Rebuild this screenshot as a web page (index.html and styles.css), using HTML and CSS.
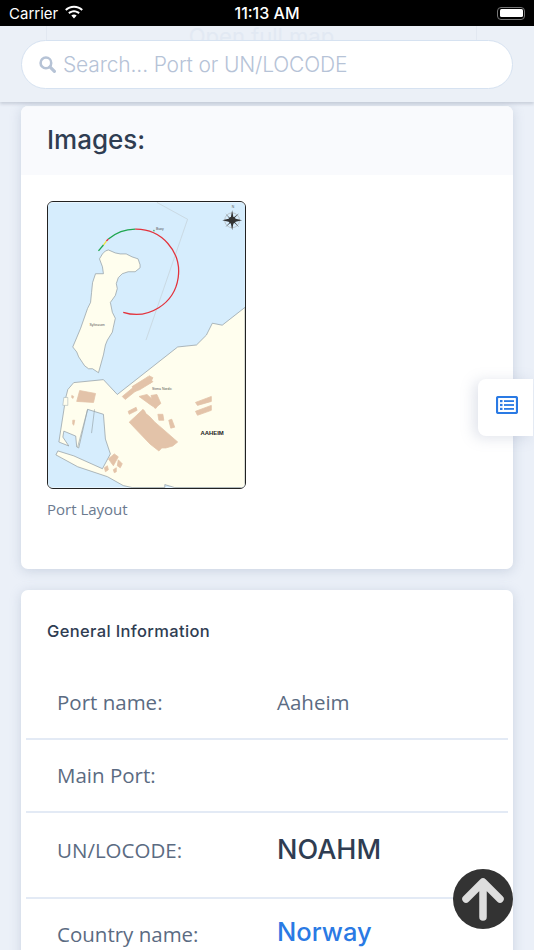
FILE: index.html
```html
<!DOCTYPE html>
<html lang="en">
<head>
<meta charset="utf-8">
<title>Port Aaheim</title>
<link rel="stylesheet" href="styles.css">
</head>
<body>
<div class="page">
  <div class="status">
    <div class="status-left">
      <span>Carrier</span>
      <svg class="wifi" viewBox="0 0 18 13"><path d="M9 2.200c2.600 0 5 1 6.800 2.700l1.200-1.300C14.900 1.600 12.100.4 9 .4S3.100 1.600 1 3.600l1.200 1.300C4 3.200 6.400 2.200 9 2.200zM9 6.200c1.500 0 2.900.6 4 1.600l1.200-1.300C12.800 5.200 11 4.400 9 4.400s-3.800.8-5.200 2.100L5 7.800c1.100-1 2.500-1.600 4-1.600zM9 8.300c-.9 0-1.700.3-2.400.9L9 12l2.400-2.800c-.7-.6-1.500-.9-2.400-.9z" fill="#fff"/></svg>
    </div>
    <span class="status-time">11:13 AM</span>
    <div class="battery"><span class="battery-fill"></span></div>
  </div>

  <header class="search-bar">
    <div class="ghost">Open full map</div>
    <div class="search-input">
      <svg class="search-icon" viewBox="0 0 16 16"><circle cx="6.500" cy="6.500" r="5" fill="none" stroke="#b6c3d6" stroke-width="2.400"/><path d="M10.300 10.300l4.200 4.200" stroke="#b6c3d6" stroke-width="3" stroke-linecap="round"/></svg>
      <span>Search... Port or UN/LOCODE</span>
    </div>
  </header>

  <main class="content">
    <section class="card card-images">
      <h2 class="card-head">Images:</h2>
      <figure class="figure">
        <svg class="map" viewBox="47 201 199 288">
          <rect x="47" y="201" width="199" height="288" fill="#d6edfd"/>
          <path d="M157 201L188 218L146 340" fill="none" stroke="#c3ccd2" stroke-width=".6"/>
          <path class="coast" d="M102 253L105 250L108 249L115 252L120 253L126 253L132 256L138 258L140 264L140 267L135 271L128 271L122 273L118 277L116 283L117 288L115 295L110 302L112 312L115 318L113 327L112 332L107 340L105 345L103 355L98 373L92 369L88 369L84 366L82 363L78 357L76 352L72 347L75 340L80 328L87 308L90 302L91 292L92 282L95 273L103 273L102 266L99 258Z"/>
          <path class="coast" d="M246 307L223 325L213 323L207 335L197 345L178 347L117 395L103 380L73 383L67 390L65 398L60 430L58 443L68 447L62 438L63 432L75 437L76 448L78 449L87 410L103 415L105 440L110 455L102 470L73 457L57 452L55 456L77 468L107 478L123 487L132 489L165 489L165 486L175 489L246 489Z"/>
          <path d="M94 410L91 434" fill="none" stroke="#9aa7ad" stroke-width=".7"/>
          <path d="M87 410L77 448" fill="none" stroke="#9aa7ad" stroke-width=".7"/>
          <path d="M63 398h4v8h-5z" fill="#fffeee" stroke="#9aa7ad" stroke-width=".5"/>
          <g class="buildings">
            <path d="M79 391L95 394L93 403L76 402Z"/>
            <path d="M122 397L133 388L135 392L125 400Z"/>
            <path d="M132 387L148 377L153 382L140 390L135 392Z"/>
            <path d="M149 376L153 378L150 384L147 382Z"/>
            <path d="M139 397L147 395L158 405L156 409L150 405Z"/>
            <path d="M151 396L157 395L161 404L155 409Z"/>
            <path d="M128 412L136 408L137 411L129 415Z"/>
            <path d="M129 423L143 410L155 423L162 429L178 443L173 447L166 449L162 449L159 452L150 445Z"/>
            <path d="M158 415L163 415L164 421L159 421Z"/>
            <path d="M169 421L172 420L175 428L171 429Z"/>
            <path d="M196 403L212 397L212 402L198 406Z"/>
            <path d="M196 412L212 406L212 411L198 416Z"/>
            <path d="M108 460L114 455L118 458L113 467Z"/>
            <path d="M118 461L122 465L120 469L117 467Z"/>
            <path d="M104 469L107 467L108 471L105 473Z"/>
            <path d="M113 471L116 469L116 473L114 474Z"/>
            <path d="M71 396L73 397L72 399L71 398Z"/>
            <path d="M72 421L74 421L73 426L72 425Z"/>
          </g>
          <path d="M145 410L155 418L154 420L146 414Z" fill="#fffeee"/>
          <path class="arc arc-red" d="M123 312A43 43 0 1 0 135 228"/>
          <path class="arc arc-green" d="M135 228A43 43 0 0 0 108 238"/>
          <path class="arc arc-red" d="M108 238L106 240"/>
          <path class="arc arc-yellow" d="M106 240L103 244"/>
          <path class="arc arc-green" d="M103 244L98 250"/>
          <circle cx="154" cy="229.500" r=".8" fill="#4caf6a"/>
          <g>
            <circle cx="233" cy="219" r="7.500" fill="none" stroke="#aaa" stroke-width=".6"/>
            <path d="M233 209L234.500 217L243 219L234.500 221L233 229L231.500 221L223 219L231.500 217Z" fill="#333"/>
            <path d="M226 212L232 218L240 212L234 218.500L240 226L233.500 220L226 226L232 219.500Z" fill="#444"/>
            <circle cx="233" cy="219" r="3.500" fill="#333"/>
          </g>
          <text class="map-label" x="156" y="229">Buoy</text>
          <text class="map-label" x="89" y="326">Sylteåsen</text>
          <text class="map-label" x="152" y="390">Stena Nordic</text>
          <text class="map-town" x="201" y="436">AAHEIM</text>
          <text class="map-label" x="232.500" y="207">N</text>
        </svg>
        <figcaption class="caption">Port Layout</figcaption>
      </figure>
    </section>

    <section class="card card-info">
      <h3 class="info-title">General Information</h3>
      <dl class="rows">
        <div class="row row-a"><dt>Port name:</dt><dd>Aaheim</dd></div>
        <div class="row row-b"><dt>Main Port:</dt><dd></dd></div>
        <div class="row row-c"><dt>UN/LOCODE:</dt><dd class="code">NOAHM</dd></div>
        <div class="row row-d"><dt>Country name:</dt><dd class="country">Norway</dd></div>
      </dl>
    </section>
  </main>

  <button class="side-tab" aria-label="Contents">
    <svg viewBox="0 0 22 18"><rect x="1" y="1" width="20" height="16" rx="1.500" fill="none" stroke="#2a7ae4" stroke-width="2.200"/><g fill="#2a7ae4"><rect x="4" y="4" width="2.500" height="2.200"/><rect x="4" y="7.900" width="2.500" height="2.200"/><rect x="4" y="11.800" width="2.500" height="2.200"/><rect x="8" y="4.200" width="10" height="1.800"/><rect x="8" y="8.100" width="10" height="1.800"/><rect x="8" y="12" width="10" height="1.800"/></g></svg>
  </button>
  <button class="to-top" aria-label="Back to top">
    <svg viewBox="0 0 60 60"><path d="M30 48V15M13 30L30 13L47 30" fill="none" stroke="#dedede" stroke-width="7.500" stroke-linecap="round" stroke-linejoin="round"/></svg>
  </button>
</div>
</body>
</html>
```

FILE: styles.css
```css
* { box-sizing: border-box; }
html, body { margin: 0; padding: 0; }
body { background: #ebf0f8; font-family: "Open Sans", sans-serif; }
.page { position: relative; width: 534px; height: 950px; overflow: hidden; }

.status { height: 26px; background: #000; color: #fff; display: flex; align-items: center; justify-content: space-between; padding: 0 9px 0 9px; position: relative; font-family: "Inter", "Liberation Sans", sans-serif; font-size: 15px; }
.status-left { display: flex; align-items: center; gap: 6px; }
.wifi { width: 20px; height: 15px; margin-top: -2px; }
.status-time { position: absolute; left: 0; right: 0; text-align: center; font-weight: 500; font-size: 16px; }
.battery { width: 28px; height: 13px; border: 1.500px solid #777; border-radius: 4px; padding: 1.500px; position: relative; }
.battery-fill { display: block; height: 100%; background: #fff; border-radius: 1.500px; }

.search-bar { position: relative; height: 76px; padding: 14px 21px 0; background: #ebf0f7; box-shadow: 0 2px 3px rgba(120, 130, 150, .3); z-index: 2; }
.ghost { position: absolute; left: 46px; width: 431px; top: 0; height: 14px; overflow: hidden; border-left: 1px solid #e2e8f1; border-right: 1px solid #e2e8f1; text-align: center; color: #e2e9f3; font-family: "Inter", sans-serif; font-size: 22px; line-height: 20px; }
.search-input { position: relative; height: 49px; background: #fff; border: 1px solid #d6e2f1; border-radius: 25px; display: flex; align-items: center; padding-left: 17px; gap: 7px; color: #b6c3d7; font-family: "Inter", sans-serif; font-size: 21px; font-weight: 300; letter-spacing: -.15px; padding-bottom: 1px; }
.search-icon { width: 17px; height: 17px; flex: none; }

.content { padding: 4px 21px 0; display: flex; flex-direction: column; gap: 21px; }
.card { background: #fff; border-radius: 7px; box-shadow: 0 2px 12px rgba(130, 145, 175, .3); overflow: hidden; }
.card-images { height: 463px; }
.card-head { margin: 0; height: 69px; background: #f9fafd; padding: 0 26px 2px; display: flex; align-items: center; color: #2f3d52; font-family: "Inter", sans-serif; font-weight: 500; font-size: 26px; }
.figure { margin: 26px 0 0 26px; width: 199px; }
.map { display: block; width: 199px; height: 288px; border: 1.500px solid #222; border-radius: 6px; }
.coast { fill: #fffeee; stroke: #8f9aa0; stroke-width: .7; }
.buildings { fill: #e3c3a9; stroke: #e3c3a9; stroke-width: .8; stroke-linejoin: round; }
.arc { fill: none; stroke-width: 1.300; }
.arc-red { stroke: #e3333c; }
.arc-green { stroke: #1fa64f; }
.arc-yellow { stroke: #f1e03a; }
.map-label { font-family: "Liberation Sans", sans-serif; font-size: 3.500px; fill: #555; }
.map-town { font-family: "Liberation Sans", sans-serif; font-size: 6px; font-weight: 700; fill: #222; }
.caption { margin-top: 10px; color: #6b7a8f; font-size: 15px; line-height: 20px; }

.card-info { height: 420px; padding: 0 5px; }
.info-title { margin: 0; padding: 31px 21px 0; color: #2f3d52; font-family: "Inter", sans-serif; font-weight: 500; font-size: 16.500px; letter-spacing: .35px; line-height: 20px; height: 79px; }
.rows { margin: 0; }
.row { display: flex; align-items: center; padding-left: 31px; border-bottom: 2px solid #e3eaf5; color: #5b6b82; font-size: 20.500px; }
.row-a { height: 71px; padding-bottom: 3px; }
.row-b { height: 73px; padding-bottom: 2px; }
.row-c { height: 86px; padding-bottom: 11px; }
.row-d { height: 72px; border-bottom: 0; padding-bottom: 2px; }
.row dt { width: 220px; flex: none; }
.row dd { margin: 0; }
.code { color: #2f3d52; font-family: "Inter", sans-serif; font-weight: 500; font-size: 27px; }
.country { color: #2a7ae4; font-family: "Inter", sans-serif; font-weight: 500; font-size: 25.500px; margin-top: -5px !important; }

.side-tab { position: absolute; right: 1px; top: 379px; width: 55px; height: 57px; padding: 0 0 5px 3px; border: 0; background: #fff; border-radius: 8px 0 0 8px; box-shadow: -4px 2px 14px rgba(130, 145, 175, .25); display: flex; align-items: center; justify-content: center; }
.side-tab svg { width: 22px; height: 18px; }
.to-top { position: absolute; left: 453px; top: 869px; width: 60px; height: 60px; padding: 0; border: 0; border-radius: 50%; background: #333; }
.to-top svg { display: block; width: 60px; height: 60px; }
```
